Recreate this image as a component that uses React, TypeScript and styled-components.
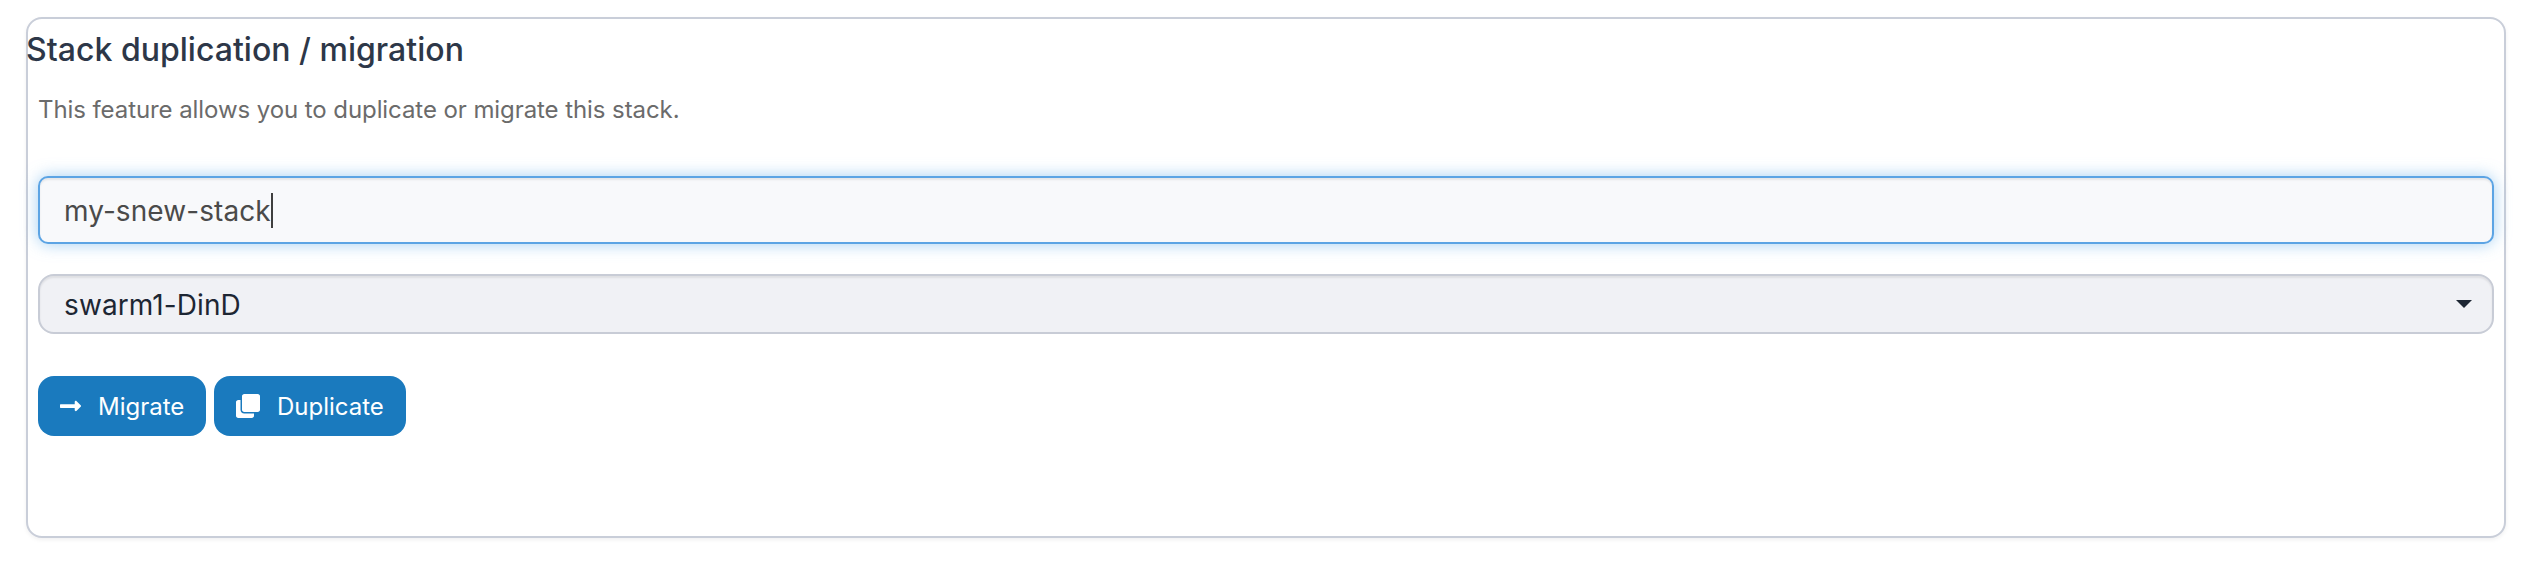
import React from 'react';
import styled, { createGlobalStyle } from 'styled-components';
import { FaClone, FaLongArrowAltRight } from 'react-icons/fa';

const GlobalStyle = createGlobalStyle`
  * { box-sizing: border-box; }
  body { margin: 0; background: #fff; font-family: Inter, sans-serif; }
`;

const Page = styled.main`
  padding: 17px 20px 26px 26px;
`;

const Panel = styled.section`
  display: flex;
  flex-direction: column;
  height: 521px;
  border: 2px solid #c9ced9;
  border-radius: 16px;
  background: #fff;
  box-shadow: 0 2px 4px rgba(16, 24, 40, 0.06);
`;

const Title = styled.h2`
  margin: 11px 0 0 -2px;
  font-size: 32px;
  line-height: 40px;
  font-weight: 500;
  letter-spacing: 0.02px;
  color: #2d3748;
`;

const Form = styled.form`
  display: flex;
  flex-direction: column;
  padding: 0 10px;
`;

const Hint = styled.p`
  margin: 24px 0 50px;
  font-size: 24px;
  line-height: 32px;
  letter-spacing: -0.08px;
  color: #6b6b6b;
`;

const TextField = styled.div`
  display: flex;
  align-items: center;
  height: 68px;
  padding: 1px 24px 0;
  border: 2px solid #5ca4e4;
  border-radius: 10px;
  background: #f8f9fb;
  box-shadow: inset 0 2px 2px rgba(0, 0, 0, 0.075), 0 0 16px rgba(102, 175, 233, 0.6);
  font-size: 28px;
  line-height: 34px;
  letter-spacing: 0.08px;
  color: #4a4a4a;
`;

const Caret = styled.span`
  width: 2px;
  height: 35px;
  background: #3f3f3f;
`;

const SelectField = styled.div`
  display: flex;
  align-items: center;
  justify-content: space-between;
  height: 60px;
  margin-top: 30px;
  padding: 0 20px 0 24px;
  border: 2px solid #c8ccd6;
  border-radius: 16px;
  background: #f0f1f5;
  box-shadow: inset 0 2px 2px rgba(0, 0, 0, 0.075);
  font-size: 28px;
  line-height: 34px;
  letter-spacing: 0.1px;
  color: #1d2633;
`;

const SelectedValue = styled.span`
  padding-top: 2px;
`;

const Arrow = styled.span`
  border: 8px solid transparent;
  border-top-color: #1d2633;
  border-bottom: 0;
`;

const Actions = styled.div`
  display: flex;
  gap: 8px;
  margin-top: 42px;
`;

const Button = styled.button<{ $width: number; $iconWidth: number }>`
  display: flex;
  align-items: center;
  gap: 17px;
  width: ${({ $width }) => $width}px;
  height: 60px;
  padding: 0 0 0 22px;
  border: 0;
  border-radius: 16px;
  background: #1a7abe;
  color: #fff;
  font: 400 24px/32px Inter, sans-serif;
  white-space: nowrap;

  svg {
    flex: none;
    width: ${({ $iconWidth }) => $iconWidth}px;
    height: 24px;
  }
`;

const ButtonLabel = styled.span`
  padding-top: 1px;
`;

export default function App() {
  return (
    <Page>
      <GlobalStyle />
      <Panel>
        <Title>Stack duplication / migration</Title>
        <Form>
          <Hint>This feature allows you to duplicate or migrate this stack.</Hint>
          <TextField>
            my-snew-stack
            <Caret />
          </TextField>
          <SelectField>
            <SelectedValue>swarm1-DinD</SelectedValue>
            <Arrow />
          </SelectField>
          <Actions>
            <Button type="button" $width={168} $iconWidth={21}>
              <FaLongArrowAltRight />
              <ButtonLabel>Migrate</ButtonLabel>
            </Button>
            <Button type="button" $width={192} $iconWidth={24}>
              <FaClone />
              <ButtonLabel>Duplicate</ButtonLabel>
            </Button>
          </Actions>
        </Form>
      </Panel>
    </Page>
  );
}
